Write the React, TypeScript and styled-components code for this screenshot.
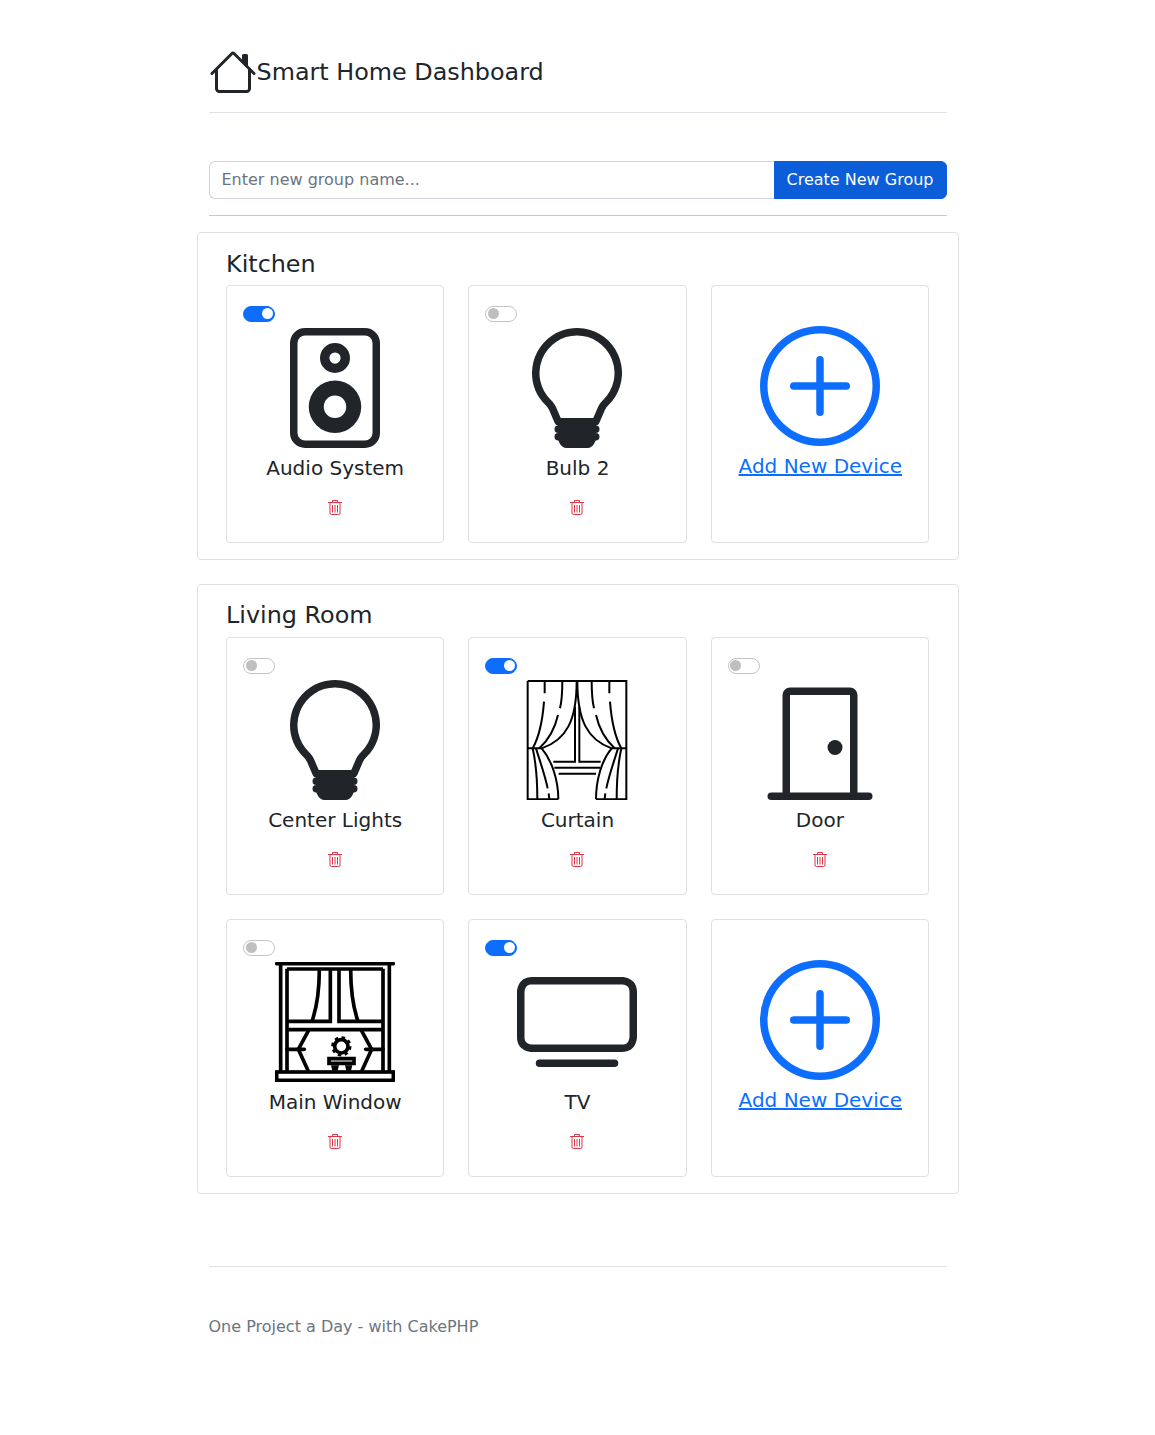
import React from 'react';
import styled, { createGlobalStyle } from 'styled-components';
import { BsDoorClosed, BsHouse, BsLightbulb, BsPlusCircle, BsSpeaker, BsTv } from 'react-icons/bs';

type DeviceKind = 'speaker' | 'bulb' | 'curtain' | 'door' | 'window' | 'tv';

interface Device {
  name: string;
  kind: DeviceKind;
  on: boolean;
}

interface Group {
  name: string;
  devices: Device[];
}

const groups: Group[] = [
  {
    name: 'Kitchen',
    devices: [
      { name: 'Audio System', kind: 'speaker', on: true },
      { name: 'Bulb 2', kind: 'bulb', on: false },
    ],
  },
  {
    name: 'Living Room',
    devices: [
      { name: 'Center Lights', kind: 'bulb', on: false },
      { name: 'Curtain', kind: 'curtain', on: true },
      { name: 'Door', kind: 'door', on: false },
      { name: 'Main Window', kind: 'window', on: false },
      { name: 'TV', kind: 'tv', on: true },
    ],
  },
];

// coordinates are the 3x crop of the reference
const CurtainIcon = () => (
  <svg width="120" height="120" viewBox="21 30 360 360" fill="none" stroke="#000" strokeWidth="6">
    <path d="M53 33H349V388H258M145 388H53V33" />
    <path d="M53 235H95M305 235H349" />
    <path d="M200 33C200 150 170 210 95 235C125 270 145 330 145 388" />
    <path d="M202 33C202 150 232 210 305 235C275 270 258 330 258 388" />
    <path d="M157 33C157 60 156 90 150 115M144 135C135 175 115 210 88 235" />
    <path d="M245 33C245 60 246 90 252 115M258 135C267 175 287 210 314 235" />
    <path d="M104 33V70M102 95C97 160 85 205 68 235" />
    <path d="M298 33V70M300 95C305 160 317 205 334 235" />
    <path d="M78 235C92 280 106 320 113 355M116 370L118 388" />
    <path d="M324 235C310 280 296 320 289 355M286 370L284 388" />
    <path d="M68 235C78 280 82 340 82 388" />
    <path d="M334 235C324 280 320 340 320 388" />
    <path d="M195 110V275H130M208 110V275H272" />
    <path d="M133 293H270M146 311H258" />
  </svg>
);

const WindowIcon = () => (
  <svg width="120" height="120" viewBox="30 30 360 360" fill="none" stroke="#000" strokeWidth="11">
    <path d="M35 35H385" strokeLinecap="round" />
    <path d="M47 35V360M66 50V360M354 50V360M373 35V360" />
    <path d="M66 51H354" />
    <rect x="35" y="360" width="350" height="25" />
    <path d="M66 208H196V51M354 208H222V51" />
    <path d="M66 233H354" />
    <path d="M163 51C163 110 156 165 141 208" />
    <path d="M257 51C257 110 264 165 279 208" />
    <path d="M132 233L100 292L130 358" />
    <path d="M288 233L320 292L290 358" />
    <path d="M66 292H118M302 292H354" strokeLinecap="round" />
    <circle cx="229" cy="283" r="20" />
    <circle cx="229" cy="283" r="27" strokeWidth="7" strokeDasharray="10.6 10.6" />
    <path d="M192 320H267V334H192Z" />
    <path d="M198 340H222L218 356H202ZM240 340H262L258 356H244Z" fill="#000" stroke="none" />
  </svg>
);

const TrashIcon = () => (
  <svg width="16" height="16" viewBox="0 0 16 16" fill="none" stroke="currentColor" strokeWidth="1">
    <path d="M5.5 2V.5H10.5V2M1 2.5H15" />
    <path d="M3 3V13A1.5 1.5 0 0 0 4.5 14.5H11.5A1.5 1.5 0 0 0 13 13V3" />
    <path d="M5.5 5V12.5M8 5V12.5M10.5 5V12.5" />
  </svg>
);

const deviceIcon = (kind: DeviceKind) => {
  switch (kind) {
    case 'speaker':
      return <BsSpeaker size={120} />;
    case 'bulb':
      return <BsLightbulb size={120} />;
    case 'curtain':
      return <CurtainIcon />;
    case 'door':
      return <BsDoorClosed size={120} />;
    case 'window':
      return <WindowIcon />;
    case 'tv':
      return <BsTv size={120} />;
  }
};

const App: React.FC = () => {
  return (
    <>
      <GlobalStyle />
      <Page>
        <Header>
          <BsHouse size={48} />
          <Title>Smart Home Dashboard</Title>
        </Header>

        <GroupForm onSubmit={(e) => e.preventDefault()}>
          <GroupInput placeholder="Enter new group name..." />
          <CreateButton type="submit">Create New Group</CreateButton>
        </GroupForm>
        <Divider />

        <Groups>
          {groups.map((group) => (
            <GroupCard key={group.name}>
              <GroupName>{group.name}</GroupName>
              <DeviceGrid>
                {group.devices.map((device) => (
                  <DeviceCard key={device.name}>
                    <SwitchRow>
                      <Switch $on={device.on} />
                    </SwitchRow>
                    <IconBox>{deviceIcon(device.kind)}</IconBox>
                    <DeviceName>{device.name}</DeviceName>
                    <DeleteLink href="#">
                      <TrashIcon />
                    </DeleteLink>
                  </DeviceCard>
                ))}
                <AddCard>
                  <AddIcon>
                    <BsPlusCircle size={120} />
                  </AddIcon>
                  <AddText>
                    <AddLink href="#">Add New Device</AddLink>
                  </AddText>
                </AddCard>
              </DeviceGrid>
            </GroupCard>
          ))}
        </Groups>

        <Footer>One Project a Day - with CakePHP</Footer>
      </Page>
    </>
  );
};

const GlobalStyle = createGlobalStyle`
  * {
    box-sizing: border-box;
  }
  body {
    margin: 0;
    background: #fff;
    color: #212529;
    font-family: "DejaVu Sans", sans-serif;
    font-size: 16px;
    line-height: 1.5;
  }
`;

const Page = styled.div`
  width: 762px;
  margin: 0 auto;
  padding: 48px 0 0;
  min-height: 1435px;
`;

const Header = styled.header`
  display: flex;
  align-items: center;
  margin: 0 12px;
  padding-bottom: 16px;
  border-bottom: 1px solid #dee2e6;
`;

// bootstrap's fluid heading size at this window width
const Title = styled.span`
  font-size: 23.865px;
  line-height: 36px;
`;

const GroupForm = styled.form`
  display: flex;
  margin: 48px 12px 0;
`;

const GroupInput = styled.input`
  flex: 1;
  min-width: 0;
  height: 38px;
  padding: 5px 12px 7px;
  border: 1px solid #ced4da;
  border-right: none;
  border-radius: 6px 0 0 6px;
  font: inherit;
  color: #212529;
  outline: none;
  &::placeholder {
    color: #6c757d;
    opacity: 1;
  }
`;

const CreateButton = styled.button`
  height: 38px;
  padding: 6px 12px;
  border: 1px solid #0b5ed7;
  border-radius: 0 6px 6px 0;
  background: #0b5ed7;
  color: #fff;
  font: inherit;
`;

const Divider = styled.hr`
  margin: 16px 12px;
  border: 0;
  border-top: 1px solid #c8c9ca;
`;

const Groups = styled.div`
  display: flex;
  flex-direction: column;
  gap: 24px;
`;

const GroupCard = styled.section`
  padding: 16px 28.5px;
  border: 1px solid #dfe0e1;
  border-radius: 4px;
`;

const GroupName = styled.h4`
  margin: 0 0 6.66px;
  padding-top: 0.5px;
  font-size: 23.865px;
  font-weight: 400;
  line-height: 1.2;
`;

const DeviceGrid = styled.div`
  display: grid;
  grid-template-columns: repeat(3, 1fr);
  gap: 24px;
`;

const DeviceCard = styled.div`
  display: flex;
  flex-direction: column;
  align-items: center;
  height: 258px;
  padding: 16px;
  border: 1px solid #dfe0e1;
  border-radius: 4px;
`;

const SwitchRow = styled.div`
  align-self: stretch;
  height: 26px;
  padding-top: 4px;
`;

const Switch = styled.span<{ $on: boolean }>`
  display: flex;
  align-items: center;
  justify-content: ${(p) => (p.$on ? 'flex-end' : 'flex-start')};
  width: 32px;
  height: 16px;
  padding: 0 1.5px;
  border: 1px solid ${(p) => (p.$on ? '#0d6efd' : '#c4c4c4')};
  border-radius: 16px;
  background: ${(p) => (p.$on ? '#0d6efd' : '#fff')};
  &::after {
    content: '';
    width: 11px;
    height: 11px;
    border-radius: 50%;
    background: ${(p) => (p.$on ? '#fff' : '#bfbfbf')};
  }
`;

const IconBox = styled.div`
  display: flex;
  width: 120px;
  height: 120px;
  color: #212529;
`;

const DeviceName = styled.div`
  align-self: stretch;
  margin-top: 5px;
  font-size: 20px;
  line-height: 30px;
  text-align: center;
`;

const DeleteLink = styled.a`
  display: flex;
  margin-top: 17px;
  color: #dc3545;
`;

const AddCard = styled(DeviceCard)`
  padding-top: 40px;
`;

const AddIcon = styled.div`
  display: flex;
  color: #0d6efd;
`;

const AddText = styled.div`
  align-self: stretch;
  margin-top: 5px;
  padding-left: 1px;
  font-size: 20px;
  line-height: 30px;
  text-align: center;
`;

const AddLink = styled.a`
  color: #0d6efd;
`;

const Footer = styled.footer`
  margin: 72px 12px 0;
  padding-top: 48px;
  border-top: 1px solid #dee2e6;
  color: #6c757d;
`;

export default App;
